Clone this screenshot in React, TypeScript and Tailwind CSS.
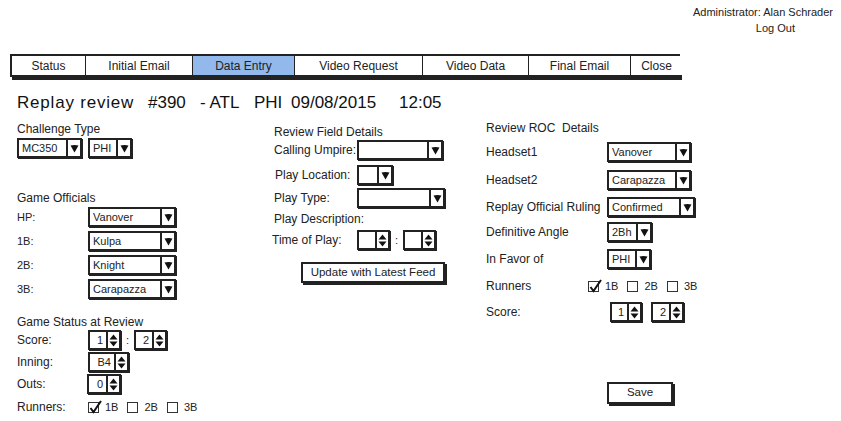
import React from 'react';

const FONT = { fontFamily: '"Liberation Sans", Arial, sans-serif' };

function DownArrow() {
  return (
    <svg width="9" height="9" viewBox="0 0 9 9">
      <path d="M0.5 1.5 Q4.5 0.5 8.5 1.5 L4.5 8.5 Z" fill="#111" />
    </svg>
  );
}

function SpinArrows() {
  return (
    <svg width="9" height="13" viewBox="0 0 9 13">
      <path d="M4.5 0.5 L8.5 5.5 L0.5 5.5 Z" fill="#111" />
      <path d="M0.5 7.5 L8.5 7.5 L4.5 12.5 Z" fill="#111" />
    </svg>
  );
}

function Select({ value = '', w }: { value?: string; w: string }) {
  return (
    <div
      className={`flex h-[20px] shrink-0 border-2 border-[#222] bg-white shadow-[1px_1px_0_#222] ${w}`}
    >
      <span className="flex-1 truncate pl-[3px] text-[11px] leading-[16px] text-[#222]">
        {value}
      </span>
      <span className="flex w-[14px] items-center justify-center border-l-2 border-[#222]">
        <DownArrow />
      </span>
    </div>
  );
}

function Spinner({ value = '', w }: { value?: string; w: string }) {
  return (
    <div
      className={`flex h-[20px] shrink-0 border-2 border-[#222] bg-white shadow-[1px_1px_0_#222] ${w}`}
    >
      <span className="flex-1 pr-[3px] text-right text-[11px] leading-[16px] text-[#222]">
        {value}
      </span>
      <span className="flex w-[13px] items-center justify-center border-l-2 border-[#222]">
        <SpinArrows />
      </span>
    </div>
  );
}

function Check({ label, checked = false }: { label: string; checked?: boolean }) {
  return (
    <span className="mr-[9px] flex items-center gap-[6px] text-[11px] text-[#222]">
      <span className="relative h-[11px] w-[11px] border border-[#333] bg-white">
        {checked && (
          <svg
            className="absolute -top-[3px] left-0"
            width="13"
            height="14"
            viewBox="0 0 13 14"
          >
            <path d="M1.5 8 L4.5 12 L12 1" stroke="#111" strokeWidth="2" fill="none" />
          </svg>
        )}
      </span>
      {label}
    </span>
  );
}

function Runners({ label, lw }: { label: string; lw: string }) {
  return (
    <div className="flex h-[14px] items-center">
      <span className={`${lw} text-[12px]`}>{label}</span>
      <Check label="1B" checked />
      <Check label="2B" />
      <Check label="3B" />
    </div>
  );
}

const TABS = [
  { label: 'Status', w: 'w-[73px]' },
  { label: 'Initial Email', w: 'w-[107px]' },
  { label: 'Data Entry', w: 'w-[102px]', active: true },
  { label: 'Video Request', w: 'w-[128px]' },
  { label: 'Video Data', w: 'w-[106px]' },
  { label: 'Final Email', w: 'w-[102px]' },
  { label: 'Close', w: 'w-[52px]' },
];

export default function App() {
  return (
    <div
      className="relative h-[421px] w-[841px] overflow-hidden bg-white text-[#222]"
      style={FONT}
    >
      {/* user header */}
      <div className="flex flex-col items-end pt-[5px] pr-[8px] text-[11px] leading-[15px]">
        <span>Administrator: Alan Schrader</span>
        <span className="mr-[38px] mt-[1px]">Log Out</span>
      </div>

      {/* tab bar */}
      <div className="ml-[10px] mt-[18px] flex h-[23px] w-[670px] border-2 border-[#222] shadow-[2px_3px_0_#222]">
        {TABS.map((t, i) => (
          <div
            key={t.label}
            className={`flex shrink-0 items-center justify-center text-[12px] ${t.w} ${
              i > 0 ? 'border-l border-[#222]' : ''
            } ${t.active ? 'bg-[#93b9ec]' : 'bg-white'}`}
          >
            {t.label}
          </div>
        ))}
      </div>

      {/* title */}
      <div className="ml-[17px] mt-[16px] flex h-[20px] items-center text-[17px] text-[#111]">
        <span className="w-[131px] tracking-[0.8px]">Replay review</span>
        <span className="w-[52px]">#390</span>
        <span className="w-[54px]">- ATL</span>
        <span className="w-[37px]">PHI</span>
        <span className="w-[108px]">09/08/2015</span>
        <span>12:05</span>
      </div>

      <div className="ml-[17px] flex text-[12px]">
        {/* left column */}
        <div className="flex w-[257px] flex-col">
          <div className="mt-[9px] h-[14px] leading-[14px]">Challenge Type</div>
          <div className="mt-[2px] flex gap-[6px]">
            <Select value="MC350" w="w-[65px]" />
            <Select value="PHI" w="w-[44px]" />
          </div>
          <div className="mt-[33px] h-[14px] leading-[14px]">Game Officials</div>
          <div className="mt-[2px] flex flex-col gap-[4px]">
            {[
              ['HP:', 'Vanover'],
              ['1B:', 'Kulpa'],
              ['2B:', 'Knight'],
              ['3B:', 'Carapazza'],
            ].map(([l, v]) => (
              <div key={l} className="flex items-center">
                <span className="w-[71px] text-[11px]">{l}</span>
                <Select value={v} w="w-[88px]" />
              </div>
            ))}
          </div>
          <div className="mt-[16px] h-[14px] leading-[14px]">Game Status at Review</div>
          <div className="mt-[1px] flex items-center">
            <span className="w-[71px]">Score:</span>
            <Spinner value="1" w="w-[33px]" />
            <span className="mx-[5px] text-[11px]">:</span>
            <Spinner value="2" w="w-[33px]" />
          </div>
          <div className="mt-[2px] flex items-center">
            <span className="w-[71px]">Inning:</span>
            <Spinner value="B4" w="w-[41px]" />
          </div>
          <div className="mt-[2px] flex items-center">
            <span className="w-[70px]">Outs:</span>
            <Spinner value="0" w="w-[34px]" />
          </div>
          <div className="mt-[6px]">
            <Runners label="Runners:" lw="w-[71px]" />
          </div>
        </div>

        {/* middle column */}
        <div className="flex w-[212px] flex-col">
          <div className="mt-[12px] h-[14px] leading-[14px]">Review Field Details</div>
          <div className="mt-[1px] flex items-center">
            <span className="w-[83px]">Calling Umpire:</span>
            <Select w="w-[86px]" />
          </div>
          <div className="mt-[5px] flex items-center">
            <span className="w-[83px] pl-[1px]">Play Location:</span>
            <Select w="w-[36px]" />
          </div>
          <div className="mt-[3px] flex items-center">
            <span className="w-[83px]">Play Type:</span>
            <Select w="w-[88px]" />
          </div>
          <div className="mt-[4px] h-[14px] leading-[14px]">Play Description:</div>
          <div className="mt-[4px] flex items-center">
            <span className="-ml-[2px] w-[85px]">Time of Play:</span>
            <Spinner w="w-[33px]" />
            <span className="mx-[5px] text-[11px]">:</span>
            <Spinner w="w-[33px]" />
          </div>
          <div className="ml-[27px] mt-[12px] flex h-[21px] w-[144px] items-center justify-center border-2 border-[#222] bg-white text-[11.5px] shadow-[2px_2px_0_#222]">
            Update with Latest Feed
          </div>
        </div>

        {/* right column */}
        <div className="flex w-[230px] flex-col">
          <div className="mt-[8px] h-[14px] leading-[14px]">Review ROC&nbsp; Details</div>
          <div className="mt-[7px] flex items-center">
            <span className="w-[121px]">Headset1</span>
            <Select value="Vanover" w="w-[84px]" />
          </div>
          <div className="mt-[8px] flex items-center">
            <span className="w-[121px]">Headset2</span>
            <Select value="Carapazza" w="w-[84px]" />
          </div>
          <div className="mt-[7px] flex items-center">
            <span className="w-[121px] whitespace-nowrap">Replay Official Ruling</span>
            <Select value="Confirmed" w="w-[88px]" />
          </div>
          <div className="mt-[5px] flex items-center">
            <span className="w-[121px]">Definitive Angle</span>
            <Select value="2Bh" w="w-[45px]" />
          </div>
          <div className="mt-[7px] flex items-center">
            <span className="w-[121px]">In Favor of</span>
            <Select value="PHI" w="w-[44px]" />
          </div>
          <div className="mt-[10px]">
            <Runners label="Runners" lw="w-[102px]" />
          </div>
          <div className="mt-[9px] flex items-center">
            <span className="w-[124px]">Score:</span>
            <Spinner value="1" w="w-[32px]" />
            <span className="w-[9px]" />
            <Spinner value="2" w="w-[33px]" />
          </div>
          <div className="ml-[121px] mt-[60px] flex h-[22px] w-[66px] items-center justify-center border-2 border-[#222] bg-white text-[11.5px] shadow-[2px_2px_0_#222]">
            Save
          </div>
        </div>
      </div>
    </div>
  );
}
